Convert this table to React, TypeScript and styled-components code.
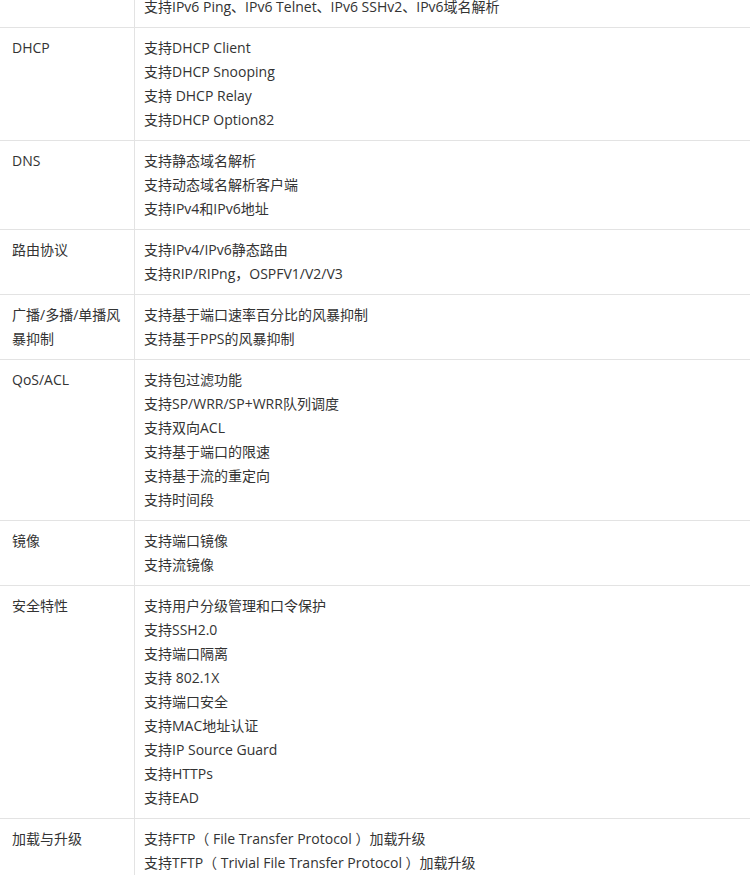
import React from "react";
import { styled, createGlobalStyle } from "styled-components";

const GlobalStyle = createGlobalStyle`
  html, body {
    margin: 0;
    padding: 0;
    background: #fff;
  }
`;

const Table = styled.div`
  width: 750px;
  margin-top: -13px;
  font-family: "Segoe UI", "Open Sans", "Noto Sans CJK SC", sans-serif;
  font-size: 14px;
  line-height: 24px;
  color: #333;
`;

const Row = styled.div`
  display: flex;
  border-bottom: 1px solid #e3e3e3;
`;

const Name = styled.div`
  width: 135px;
  flex: none;
  box-sizing: border-box;
  padding: 8px 8px 8px 12px;
  border-right: 1px solid #e3e3e3;
`;

const Items = styled.div`
  flex: 1;
  padding: 8px 9px;
`;

const Line = styled.div`
  white-space: nowrap;
`;

type Spec = { name: string; items: string[] };

const specs: Spec[] = [
  { name: "", items: ["支持IPv6 Ping、IPv6 Telnet、IPv6 SSHv2、IPv6域名解析"] },
  {
    name: "DHCP",
    items: ["支持DHCP Client", "支持DHCP Snooping", "支持 DHCP Relay", "支持DHCP Option82"],
  },
  { name: "DNS", items: ["支持静态域名解析", "支持动态域名解析客户端", "支持IPv4和IPv6地址"] },
  { name: "路由协议", items: ["支持IPv4/IPv6静态路由", "支持RIP/RIPng，OSPFV1/V2/V3"] },
  { name: "广播/多播/单播风暴抑制", items: ["支持基于端口速率百分比的风暴抑制", "支持基于PPS的风暴抑制"] },
  {
    name: "QoS/ACL",
    items: [
      "支持包过滤功能",
      "支持SP/WRR/SP+WRR队列调度",
      "支持双向ACL",
      "支持基于端口的限速",
      "支持基于流的重定向",
      "支持时间段",
    ],
  },
  { name: "镜像", items: ["支持端口镜像", "支持流镜像"] },
  {
    name: "安全特性",
    items: [
      "支持用户分级管理和口令保护",
      "支持SSH2.0",
      "支持端口隔离",
      "支持 802.1X",
      "支持端口安全",
      "支持MAC地址认证",
      "支持IP Source Guard",
      "支持HTTPs",
      "支持EAD",
    ],
  },
  {
    name: "加载与升级",
    items: [
      "支持FTP（ File Transfer Protocol ）加载升级",
      "支持TFTP（ Trivial File Transfer Protocol ）加载升级",
    ],
  },
];

export default function App() {
  return (
    <>
      <GlobalStyle />
      <Table>
        {specs.map((s, i) => (
          <Row key={i}>
            <Name>{s.name}</Name>
            <Items>
              {s.items.map((t, j) => (
                <Line key={j}>{t}</Line>
              ))}
            </Items>
          </Row>
        ))}
      </Table>
    </>
  );
}
